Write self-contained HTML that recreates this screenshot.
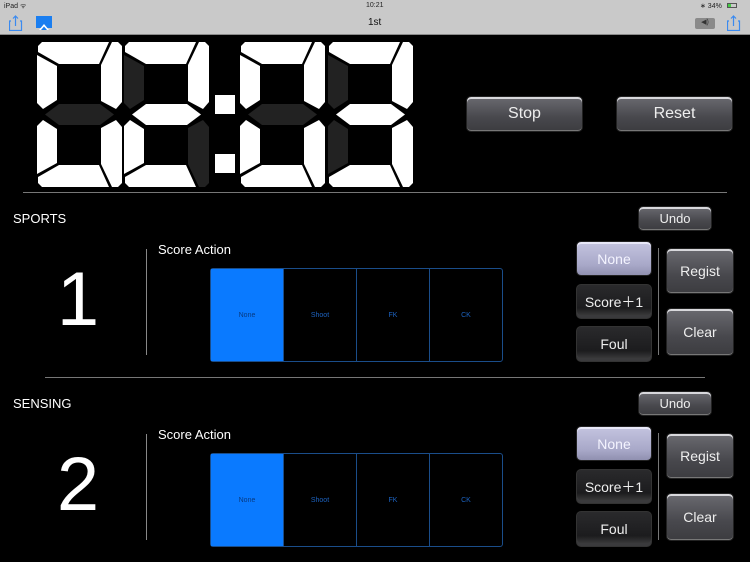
<!DOCTYPE html>
<html><head><meta charset="utf-8"><style>
*{margin:0;padding:0;box-sizing:border-box}
body{width:750px;height:562px;background:#000;font-family:"Liberation Sans",sans-serif;position:relative;overflow:hidden;color:#fff}
.abs{position:absolute}
.hdr{left:0;top:0;width:750px;height:35px;background:#c9c9c9;border-bottom:1px solid #8a8a8a}
.btn{position:absolute;border-radius:5px;background:linear-gradient(#6a6a70,#48484d 60%,#3c3c40);border:1px solid #222;box-shadow:inset 0 2px 0 #d8d8dc,inset 0 -1px 0 #777,0 1px 2px #000;color:#eee;display:flex;align-items:center;justify-content:center;font-size:14px}
.dark{background:linear-gradient(#2a2a2c,#1c1c1e 70%,#444);box-shadow:inset 0 -3px 0 #3a3a3c,0 1px 2px #000;border:1px solid #333}
.sel{background:linear-gradient(#c4c4e0,#a8a8c8 70%,#9090b0);box-shadow:inset 0 2px 0 #e8e8f8,0 1px 2px #000;color:#f4f4ff}
.seg{position:absolute;width:293px;height:94px;border:1px solid #1a4d8a;border-radius:3px;display:flex}
.seg div{flex:1;border-left:1px solid #1a4d8a;display:flex;align-items:center;justify-content:center;font-size:7px;color:#1d63c0}
.seg div:first-child{border-left:none;background:#0a7aff;color:#083a80}
</style></head><body>
<div class="abs hdr">
<div class="abs" style="left:4px;top:2px;font-size:7px;color:#222">iPad ᯤ</div>
<div class="abs" style="left:366px;top:2px;font-size:7px;color:#222">10:21</div>
<div class="abs" style="left:700px;top:2px;font-size:7px;color:#222">∗ 34%</div>
<div class="abs" style="left:727px;top:3px;width:10px;height:5px;border:1px solid #555"><div style="width:3px;height:3px;background:#4c4"></div></div>
<div class="abs" style="left:368px;top:17px;font-size:10px;color:#111">1st</div>
<svg class="abs" style="left:9px;top:15px" width="14" height="16"><path d="M2 6H0.5V15.5H12.5V6H11M6.5 11V1M4 3.5L6.5 1L9 3.5" fill="none" stroke="#3a8af0" stroke-width="1.2"/></svg>
<svg class="abs" style="left:36px;top:16px" width="16" height="14"><rect x="0" y="0" width="16" height="12" fill="#1a7ef0"/><path d="M3 14L8 8L13 14Z" fill="#fff"/><path d="M5 14L8 10.5L11 14Z" fill="#1a7ef0"/></svg>
<div class="abs" style="left:695px;top:18px;width:20px;height:11px;background:#8a8a8a;border-radius:2px;font-size:7px;color:#333;text-align:center">◀)</div>
<svg class="abs" style="left:727px;top:15px" width="14" height="16"><path d="M2 6H0.5V15.5H12.5V6H11M6.5 11V1M4 3.5L6.5 1L9 3.5" fill="none" stroke="#3a8af0" stroke-width="1.2"/></svg>
</div>

<svg class="abs" style="left:0;top:0" width="750" height="200">
<defs>
<g id="t"><polygon points="5,0 72,0 62,22 22,22 1,10 1,4"/></g>
<g id="tr"><polygon points="75,0 81,0 85,4 85,60 79,67 64,59 64,23"/></g>
<g id="tl"><polygon points="0,13 20,24 20,58 6,67 0,61"/></g>
<g id="m"><polygon points="8,72.5 22,62 63,62 77,72.5 63,83 22,83"/></g>
</defs>
<!-- digit helper: each digit: top,tr,tl,mid, bottom mirrored -->
<g transform="translate(37,42)">
<use href="#t" fill="#fff"/><use href="#tr" fill="#fff"/><use href="#tl" fill="#fff"/><use href="#m" fill="#222"/>
<g transform="translate(0,145) scale(1,-1)"><use href="#t" fill="#fff"/><use href="#tr" fill="#fff"/><use href="#tl" fill="#fff"/></g>
</g>
<g transform="translate(124,42)">
<use href="#t" fill="#fff"/><use href="#tr" fill="#fff"/><use href="#tl" fill="#222"/><use href="#m" fill="#fff"/>
<g transform="translate(0,145) scale(1,-1)"><use href="#t" fill="#fff"/><use href="#tr" fill="#222"/><use href="#tl" fill="#fff"/></g>
</g>
<rect x="215" y="95" width="20" height="19" fill="#fff"/>
<rect x="215" y="154" width="20" height="19" fill="#fff"/>
<g transform="translate(240,42)">
<use href="#t" fill="#fff"/><use href="#tr" fill="#fff"/><use href="#tl" fill="#fff"/><use href="#m" fill="#222"/>
<g transform="translate(0,145) scale(1,-1)"><use href="#t" fill="#fff"/><use href="#tr" fill="#fff"/><use href="#tl" fill="#fff"/></g>
</g>
<g transform="translate(328,42)">
<use href="#t" fill="#fff"/><use href="#tr" fill="#fff"/><use href="#tl" fill="#222"/><use href="#m" fill="#fff"/>
<g transform="translate(0,145) scale(1,-1)"><use href="#t" fill="#fff"/><use href="#tr" fill="#fff"/><use href="#tl" fill="#222"/></g>
</g>
</svg>

<div class="btn" style="left:466px;top:96px;width:117px;height:36px;font-size:16px">Stop</div>
<div class="btn" style="left:616px;top:96px;width:117px;height:36px;font-size:16px">Reset</div>
<div class="abs" style="left:23px;top:192px;width:704px;height:1px;background:#777"></div>
<div class="abs" style="left:45px;top:377px;width:660px;height:1px;background:#777"></div>

<div class="abs" style="left:13px;top:211px;font-size:13px">SPORTS</div>
<div class="abs" style="left:158px;top:242px;font-size:13px">Score Action</div>
<div class="abs" style="left:146px;top:249px;width:1px;height:106px;background:#888"></div>
<div class="abs" style="left:40px;top:255px;width:76px;text-align:center;font-size:76px;line-height:90px">1</div>
<div class="seg" style="left:210px;top:268px"><div>None</div><div>Shoot</div><div>FK</div><div>CK</div></div>
<div class="btn" style="left:638px;top:206px;width:74px;height:25px;font-size:13px">Undo</div>
<div class="btn sel" style="left:576px;top:241px;width:76px;height:35px">None</div>
<div class="btn dark" style="left:576px;top:284px;width:76px;height:35px">Score＋1</div>
<div class="btn dark" style="left:576px;top:326px;width:76px;height:36px">Foul</div>
<div class="abs" style="left:658px;top:248px;width:1px;height:107px;background:#777"></div>
<div class="btn" style="left:666px;top:248px;width:68px;height:46px">Regist</div>
<div class="btn" style="left:666px;top:308px;width:68px;height:48px">Clear</div>

<div class="abs" style="left:13px;top:396px;font-size:13px">SENSING</div>
<div class="abs" style="left:158px;top:427px;font-size:13px">Score Action</div>
<div class="abs" style="left:146px;top:434px;width:1px;height:106px;background:#888"></div>
<div class="abs" style="left:40px;top:440px;width:76px;text-align:center;font-size:76px;line-height:90px">2</div>
<div class="seg" style="left:210px;top:453px"><div>None</div><div>Shoot</div><div>FK</div><div>CK</div></div>
<div class="btn" style="left:638px;top:391px;width:74px;height:25px;font-size:13px">Undo</div>
<div class="btn sel" style="left:576px;top:426px;width:76px;height:35px">None</div>
<div class="btn dark" style="left:576px;top:469px;width:76px;height:35px">Score＋1</div>
<div class="btn dark" style="left:576px;top:511px;width:76px;height:36px">Foul</div>
<div class="abs" style="left:658px;top:433px;width:1px;height:107px;background:#777"></div>
<div class="btn" style="left:666px;top:433px;width:68px;height:46px">Regist</div>
<div class="btn" style="left:666px;top:493px;width:68px;height:48px">Clear</div>
</body></html>
